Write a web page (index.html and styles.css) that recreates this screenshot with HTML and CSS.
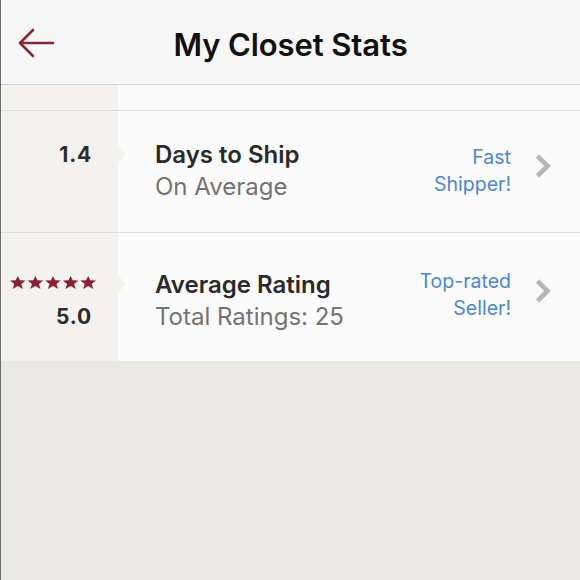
FILE: index.html
```html
<!DOCTYPE html>
<html>
<head>
<meta charset="utf-8">
<link rel="stylesheet" href="styles.css">
</head>
<body>
<div class="page">
  <header class="topbar">
    <svg class="back" width="40" height="32" viewBox="0 0 40 32">
      <path d="M36 15 H3 M16 2 L3 15 L16 28" fill="none" stroke="#8a2535" stroke-width="2.6" stroke-linecap="round" stroke-linejoin="round"/>
    </svg>
    <h1 class="title">My Closet Stats</h1>
  </header>
  <div class="row row-top">
    <div class="side"></div>
    <div class="main"></div>
  </div>
  <div class="row row-ship">
    <div class="side">
      <div class="value">1.4</div>
      <span class="notch"></span>
    </div>
    <div class="main">
      <div class="info">
        <div class="label">Days to Ship</div>
        <div class="sub">On Average</div>
      </div>
      <div class="badge">Fast<br>Shipper!</div>
      <svg class="chev" width="16" height="24" viewBox="0 0 16 24"><path d="M2.5 2 L12.5 12 L2.5 22" fill="none" stroke="#b6b6b6" stroke-width="4.6"/></svg>
    </div>
  </div>
  <div class="row row-rating">
    <div class="side">
      <div class="stars">
        <svg width="88" height="13" viewBox="0 0 88 13">
          <defs><path id="st" d="M7.8 0 L9.9 4.3 L15.6 4.6 L11.3 7.9 L12.9 13 L7.8 10.1 L2.7 13 L4.3 7.9 L0 4.6 L5.7 4.3 Z" fill="#8a2133"/></defs>
          <use href="#st" x="0"/><use href="#st" x="17.6"/><use href="#st" x="35.2"/><use href="#st" x="52.8"/><use href="#st" x="70.4"/>
        </svg>
      </div>
      <div class="value">5.0</div>
      <span class="notch"></span>
    </div>
    <div class="main">
      <div class="info">
        <div class="label">Average Rating</div>
        <div class="sub">Total Ratings: 25</div>
      </div>
      <div class="badge">Top-rated<br>Seller!</div>
      <svg class="chev" width="16" height="24" viewBox="0 0 16 24"><path d="M2.5 2 L12.5 12 L2.5 22" fill="none" stroke="#b6b6b6" stroke-width="4.6"/></svg>
    </div>
  </div>
</div>
</body>
</html>
```

FILE: styles.css
```css
html, body {
  margin: 0;
  padding: 0;
}
body {
  font-family: Inter, Lato, sans-serif;
  background: #eae8e4;
}
.page {
  width: 579px;
  height: 580px;
  border-left: 1px solid #6e6e6e;
  background: #eae8e4;
}
.topbar {
  height: 84px;
  background: #f7f7f7;
  border-bottom: 1px solid #d3d3d3;
  display: flex;
  align-items: center;
  justify-content: center;
  position: relative;
}
.back {
  position: absolute;
  left: 16px;
  top: 28px;
}
.title {
  margin: 0;
  font-size: 31px;
  font-weight: 600;
  color: #111;
  padding-top: 4px;
  letter-spacing: -0.1px;
}
.row {
  display: grid;
  grid-template-columns: 117px 1fr;
  border-bottom: 1px solid #dedcdb;
}
.row:last-child {
  border-bottom: none;
}
.side {
  background: #f4f2ef;
  position: relative;
  display: flex;
  flex-direction: column;
  align-items: flex-end;
  justify-content: flex-start;
  padding-right: 27px;
}
.main {
  background: #fcfbfb;
  display: flex;
  align-items: flex-start;
  padding-left: 37px;
  padding-right: 29px;
}
.row-top { height: 25px; }
.row-ship { height: 121px; }
.row-rating { height: 128px; }
.row-ship .side { padding-top: 32px; }
.row-rating .side { padding-top: 43px; }
.row-ship .info { margin-top: 28px; }
.row-rating .info { margin-top: 36px; }
.row-ship .badge { margin-top: 33px; }
.row-rating .badge { margin-top: 35px; }
.value {
  font-size: 21px;
  font-weight: 700;
  color: #2b2b2b;
  line-height: 24px;
  letter-spacing: 0.8px;
  margin-right: -1px;
}
.stars {
  height: 13px;
  margin-right: -7px;
  margin-bottom: 16px;
}
.stars svg { display: block; }
.notch {
  position: absolute;
  right: -8px;
  top: 34px;
  width: 0;
  height: 0;
  border-top: 9px solid transparent;
  border-bottom: 9px solid transparent;
  border-left: 8px solid #f4f2ef;
}
.row-rating .notch { top: 42px; }
.info {
  flex: 1;
}
.label {
  font-size: 24px;
  font-weight: 600;
  color: #2a2a2a;
  line-height: 32px;
}
.sub {
  font-size: 24px;
  color: #737373;
  line-height: 32px;
}
.sub-tight {
  letter-spacing: -0.2px;
}
.badge {
  text-align: right;
  color: #4d86d4;
  font-size: 19.5px;
  line-height: 27px;
}
.chev {
  margin-left: 24px;
  align-self: center;
  margin-bottom: 12px;
  display: block;
}
```
